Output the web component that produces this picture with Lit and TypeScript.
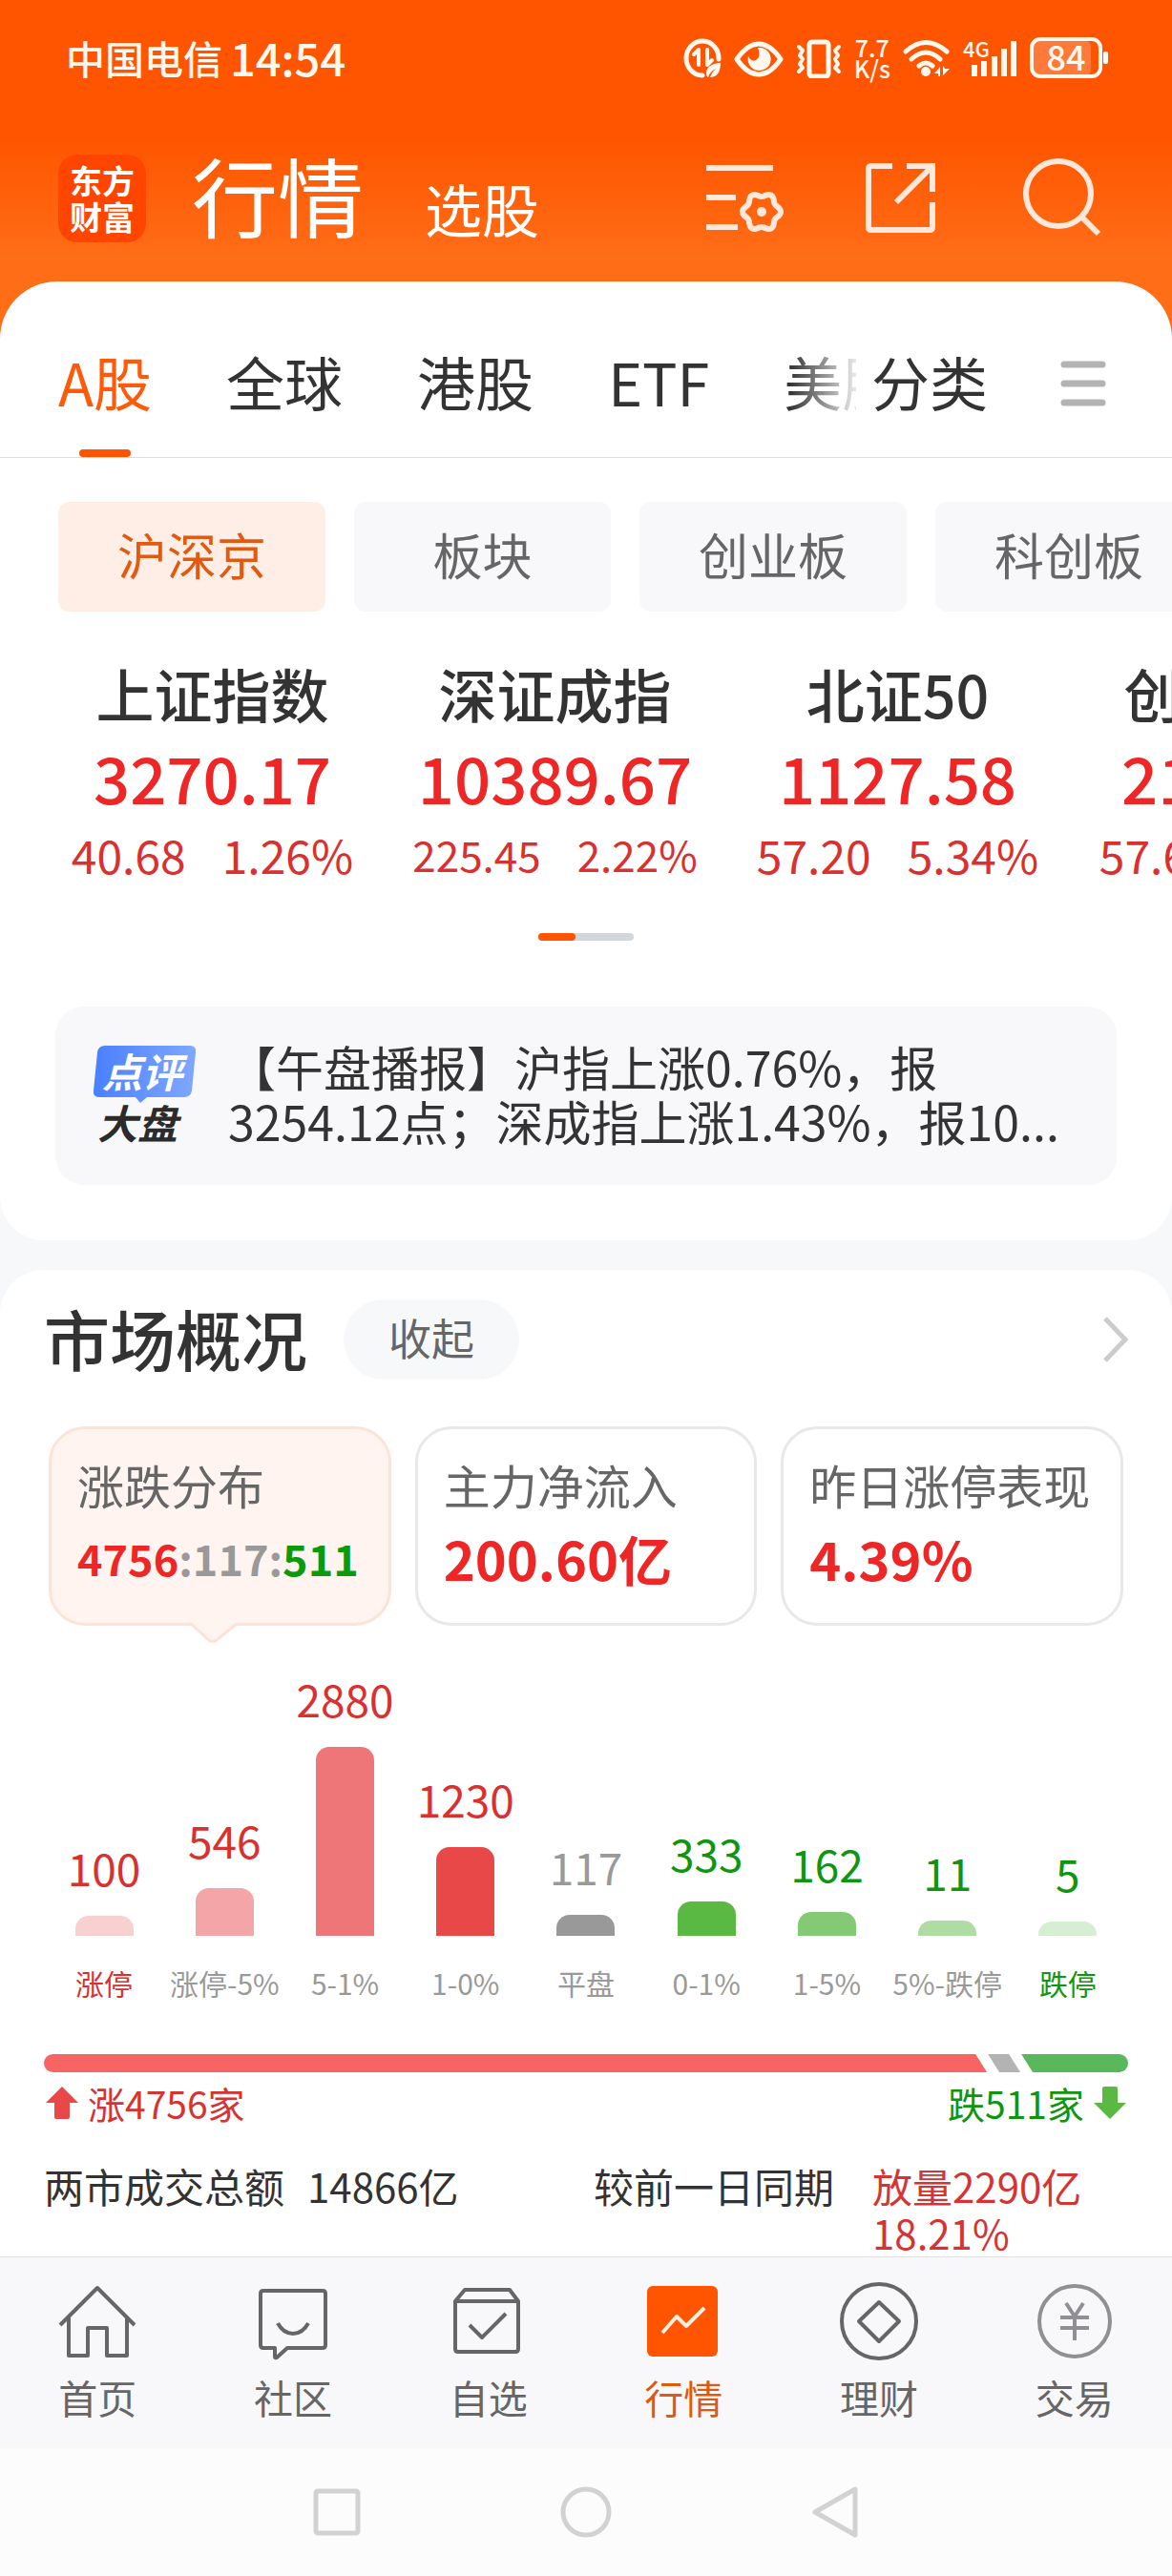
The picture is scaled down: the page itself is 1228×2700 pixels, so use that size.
import { LitElement, html, svg, css } from "lit";
import { customElement, state } from "lit/decorators.js";
import { classMap } from "lit/directives/class-map.js";
import { styleMap } from "lit/directives/style-map.js";

interface IndexQuote {
  name: string;
  price: string;
  change: string;
  percent: string;
  small?: boolean;
}

interface Bucket {
  label: string;
  count: number;
  height: number;
  tone: string;
  text: string;
  edge?: boolean;
}

const TABS = ["A股", "全球", "港股", "ETF", "美股"];
const BOARDS = ["沪深京", "板块", "创业板", "科创板"];

const QUOTES: IndexQuote[] = [
  { name: "上证指数", price: "3270.17", change: "40.68", percent: "1.26%" },
  { name: "深证成指", price: "10389.67", change: "225.45", percent: "2.22%", small: true },
  { name: "北证50", price: "1127.58", change: "57.20", percent: "5.34%" },
  { name: "创业板指", price: "2168.92", change: "57.64", percent: "2.73%" },
];

const BUCKETS: Bucket[] = [
  { label: "涨停", count: 100, height: 21, tone: "r1", text: "up", edge: true },
  { label: "涨停-5%", count: 546, height: 50, tone: "r2", text: "up" },
  { label: "5-1%", count: 2880, height: 198, tone: "r3", text: "up" },
  { label: "1-0%", count: 1230, height: 93, tone: "r4", text: "up" },
  { label: "平盘", count: 117, height: 22, tone: "flat-bar", text: "flat" },
  { label: "0-1%", count: 333, height: 36, tone: "g4", text: "down" },
  { label: "1-5%", count: 162, height: 25, tone: "g3", text: "down" },
  { label: "5%-跌停", count: 11, height: 16, tone: "g2", text: "down" },
  { label: "跌停", count: 5, height: 15, tone: "g1", text: "down", edge: true },
];

/* Six-lobed cog outline around a centre point. */
const cog = (cx: number, cy: number, r: number, depth: number): string => {
  const pts: string[] = [];
  for (let i = 0; i < 96; i++) {
    const a = (i / 96) * Math.PI * 2;
    const rr = r + depth * Math.cos(6 * a);
    pts.push(`${(cx + rr * Math.cos(a)).toFixed(2)} ${(cy + rr * Math.sin(a)).toFixed(2)}`);
  }
  return `M${pts.join("L")}Z`;
};

const NAV = [
  {
    label: "首页",
    icon: svg`<path d="M3 46 42 7 81 46M12 38V78H32V49H52V78H73V38"/>`,
  },
  {
    label: "社区",
    icon: svg`<path d="M11 10H73Q76 10 76 13V67Q76 70 73 70H36L25 80Q23 81 23 79V70H11Q8 70 8 67V13Q8 10 11 10Z"/><path d="M26 44Q32 55 42 55T58 44"/>`,
  },
  {
    label: "自选",
    icon: svg`<path d="M17 9H64L73 21V71Q73 74 70 74H10Q7 74 7 71V21ZM7 21H73M22 46 35 59 60 34"/>`,
  },
  {
    label: "行情",
    icon: svg`<rect class="solid" x="4" y="5" width="74" height="74" rx="6"/><path class="trace" d="M20 54 35 37 45 47 64 28"/>`,
  },
  {
    label: "理财",
    icon: svg`<circle cx="42" cy="42" r="39"/><path d="M42 22 63 42 42 63 21 42Z"/>`,
  },
  {
    label: "交易",
    icon: svg`<g class="pale"><circle cx="42" cy="42" r="37"/><path d="M33 23 42 37 51 23M42 37V62M27 38H57M27 49H57"/></g>`,
  },
];

@customElement("status-bar")
export class StatusBar extends LitElement {
  static styles = css`
    :host {
      display: flex;
      align-items: center;
      justify-content: space-between;
      padding: 38px 67px 0 69px;
      color: #fff8ee;
    }
    .left {
      display: flex;
      align-items: center;
      gap: 8px;
      line-height: 44px;
      font-weight: 500;
    }
    .carrier {
      font-size: 41px;
    }
    .clock {
      font-size: 47px;
    }
    .right {
      display: flex;
      align-items: center;
      gap: 13px;
    }
    .right svg {
      display: block;
      height: 44px;
      fill: none;
      stroke: currentColor;
      stroke-width: 5;
      stroke-linecap: round;
      stroke-linejoin: round;
    }
    .fill {
      fill: currentColor;
      stroke: none;
    }
    .level {
      fill: rgba(255, 255, 255, 0.22);
      stroke: none;
    }
    .thin {
      stroke-width: 4;
    }
    .speed {
      font-size: 25px;
      line-height: 22px;
      text-align: center;
      font-weight: 500;
    }
    .num {
      font-size: 36px;
      font-weight: 500;
    }
    .gen {
      font-size: 22px;
      font-weight: 500;
    }
  `;

  render() {
    return html`
      <div class="left"><span class="carrier">中国电信</span><span class="clock">14:54</span></div>
      <div class="right">
        <svg width="40" viewBox="0 0 40 44" aria-hidden="true">
          <path d="M37 24A17 18 0 1 0 20 41" />
          <path class="thin" d="M11 19 16 14V30M25 14V30L30 25" />
          <path class="fill" d="M39 28C30 28 24 32 24 39C24 41 25 43 26 43C27 39 30 36 34 34C31 37 29 40 28 43C35 43 39 38 39 28Z" />
        </svg>
        <svg width="52" viewBox="0 0 52 44" aria-hidden="true">
          <path d="M3 24Q14 8 26 8T49 24Q38 40 26 40T3 24Z" />
          <path class="fill" d="M27 12A12 12 0 1 1 15 21Q18 27 23 25Q29 21 25 12Z" />
        </svg>
        <svg width="48" viewBox="0 0 48 44" aria-hidden="true">
          <rect x="14" y="6" width="20" height="36" rx="3" />
          <path class="thin" d="M3 11 7 15 4 20 7 24 4 29 7 33 3 37M45 11 41 15 44 20 41 24 44 29 41 33 45 37" />
        </svg>
        <div class="speed">7.7<br />K/s</div>
        <svg width="50" viewBox="0 0 50 44" aria-hidden="true">
          <path d="M3 16Q24-3 46 16M9 24Q24 10 39 24M17 31Q24 25 31 31" />
          <circle class="fill" cx="24" cy="37" r="5" />
          <path class="fill" d="M39 32V42H37V39H33ZM42 31V41L49 34H44Z" />
        </svg>
        <svg width="57" viewBox="0 0 57 44" aria-hidden="true">
          <text class="fill gen" x="0" y="22">4G</text>
          <path class="fill" d="M9 30h6v12H9zM19 26h6v16h-6zM30 21h6v21h-6zM40 13h6v29h-6zM50 5h6v37h-6z" />
        </svg>
        <svg width="82" viewBox="0 0 82 44" aria-label="电量 84%">
          <rect class="level" x="4" y="4" width="60" height="38" rx="7" />
          <rect class="thin" x="2" y="3" width="72" height="39" rx="9" />
          <rect class="fill" x="77" y="16" width="5" height="13" rx="2" />
          <text class="fill num" x="38" y="36" text-anchor="middle">84</text>
        </svg>
      </div>
    `;
  }
}

@customElement("change-chart")
export class ChangeChart extends LitElement {
  static styles = css`
    :host {
      display: grid;
      grid-template-columns: repeat(9, 1fr);
    }
    .col {
      display: flex;
      flex-direction: column;
      align-items: center;
      justify-content: flex-end;
      min-height: 348px;
      white-space: nowrap;
    }
    .count {
      font-size: 46px;
      line-height: 60px;
    }
    .bar {
      width: 61px;
      margin: 21px 0 29px;
      border-radius: 14px 14px 0 0;
    }
    .label {
      font-size: 30px;
      line-height: 40px;
      color: #999;
    }
    .up,
    .label.up.edge {
      color: #d93030;
    }
    .down,
    .label.down.edge {
      color: #0f960f;
    }
    .flat {
      color: #999;
    }
    .label.up:not(.edge),
    .label.down:not(.edge) {
      color: #999;
    }
    .r1 { background: #f9d0d0; }
    .r2 { background: #f4a5a7; }
    .r3 { background: #ee7678; }
    .r4 { background: #e84848; }
    .flat-bar { background: #999; }
    .g4 { background: #5ab943; }
    .g3 { background: #84ca75; }
    .g2 { background: #addda2; }
    .g1 { background: #d6eed1; }
  `;

  render() {
    return BUCKETS.map(
      (b) => html`<div class="col">
        <span class=${`count ${b.text}`}>${b.count}</span>
        <span class=${`bar ${b.tone}`} style=${styleMap({ height: `${b.height}px` })}></span>
        <span class=${classMap({ label: true, [b.text]: true, edge: !!b.edge })}>${b.label}</span>
      </div>`,
    );
  }
}

@customElement("app-root")
export class AppRoot extends LitElement {
  @state() private tab = "A股";
  @state() private board = "沪深京";

  static styles = css`
    :host {
      display: flex;
      flex-direction: column;
      min-height: 100vh;
      overflow: hidden;
      font-family: "Noto Sans CJK SC", sans-serif;
      color: #333;
      background: linear-gradient(#ff5500 0, #ff5500 145px, #ff6d17 270px, #ff6d17 360px) no-repeat 0 0 / 100% 360px #f7f8fa;
    }
    button {
      font: inherit;
      color: inherit;
      background: none;
      border: 0;
      padding: 0;
      margin: 0;
      flex: none;
      white-space: nowrap;
    }
    a {
      color: inherit;
      text-decoration: none;
    }
    h2,
    p {
      margin: 0;
    }
    svg {
      display: block;
      flex: none;
      fill: none;
    }

    .head {
      display: flex;
      align-items: center;
      padding: 80px 74px 41px 61px;
      color: #fff;
    }
    .logo {
      display: grid;
      place-content: center;
      width: 92px;
      height: 92px;
      border-radius: 20px;
      background: #ff4500;
      font-size: 34px;
      line-height: 38px;
      font-weight: 700;
      text-align: center;
    }
    .modes {
      display: flex;
      align-items: flex-end;
      align-self: flex-start;
      gap: 64px;
      flex: 1;
      margin-left: 48px;
    }
    .modes .main {
      font-size: 90px;
      line-height: 82px;
    }
    .modes .sub {
      font-size: 60px;
      line-height: 52px;
    }
    .tools {
      display: flex;
      gap: 82px;
    }
    .tools svg {
      stroke: #ffe8d9;
      stroke-width: 6;
    }
    .dot {
      fill: #ffe8d9;
      stroke: none;
    }

    .quotes-card {
      background: #fff;
      border-radius: 60px 60px 46px 46px;
      padding-bottom: 58px;
    }
    .tabs {
      display: flex;
      border-bottom: 1px solid #ddd;
      font-size: 61px;
      line-height: 84px;
      padding-right: 69px;
    }
    .scroller {
      display: flex;
      gap: 78px;
      flex: 1;
      min-width: 0;
      padding-left: 61px;
      overflow: hidden;
      -webkit-mask-image: linear-gradient(to right, #000 calc(100% - 70px), rgba(0, 0, 0, 0.1));
      mask-image: linear-gradient(to right, #000 calc(100% - 70px), rgba(0, 0, 0, 0.1));
    }
    .tab {
      display: flex;
      flex-direction: column;
      align-items: center;
      gap: 29px;
      padding-top: 63px;
    }
    .tab::after {
      content: "";
      width: 54px;
      height: 8px;
      border-radius: 4px;
    }
    .tab.on {
      color: #fe5a0a;
    }
    .tab.on::after {
      background: #ff5500;
    }
    .sorts {
      margin: 0 76px 0 16px;
    }
    .menu {
      padding-top: 30px;
    }
    .menu svg {
      stroke: #b3b3b3;
      stroke-width: 7;
      stroke-linecap: round;
    }

    .boards {
      display: flex;
      gap: 30px;
      padding: 46px 0 0 61px;
      overflow: hidden;
    }
    .board {
      min-width: 269px;
      padding: 0 62px 5px;
      border-radius: 12px;
      background: #f8f8fa;
      color: #666;
      font-size: 52px;
      line-height: 110px;
    }
    .board.on {
      background: #ffeee6;
      color: #e2590f;
    }

    .quotes {
      display: flex;
      margin: 0;
      padding: 46px 0 0 43px;
      list-style: none;
      overflow: hidden;
      text-align: center;
    }
    .quote {
      flex: none;
      width: 359px;
      color: #e93030;
    }
    .name {
      font-size: 61px;
      line-height: 80px;
      font-weight: 500;
      color: #333;
    }
    .price {
      font-size: 67px;
      line-height: 94px;
      font-weight: 500;
      color: #ee2626;
    }
    .delta {
      display: flex;
      justify-content: center;
      gap: 38px;
      font-size: 48px;
      line-height: 68px;
      color: #d93030;
    }
    .delta.small {
      font-size: 44px;
    }
    .pager {
      width: 100px;
      height: 8px;
      margin: 49px auto 69px;
      border-radius: 4px;
      background: #d3d7dc;
    }
    .pager::before {
      content: "";
      display: block;
      width: 39px;
      height: 8px;
      border-radius: 4px;
      background: #ff5500;
    }

    .news {
      display: flex;
      align-items: center;
      gap: 32px;
      margin: 0 58px;
      padding: 34px 28px 39px 39px;
      border-radius: 30px;
      background: #f8f8fa;
      font-size: 50px;
      line-height: 57px;
    }
    .chip-text {
      fill: #fff;
    }
    .board-text {
      fill: #2b2b2b;
    }
    .badge-text {
      font-size: 42px;
      font-weight: 700;
      font-style: italic;
    }

    .market {
      flex: 1;
      margin-top: 31px;
      padding: 31px 46px 1px;
      border-radius: 46px 46px 0 0;
      background: #fff;
    }
    .title-row {
      display: flex;
      align-items: center;
    }
    .title-row h2 {
      font-size: 69px;
      line-height: 78px;
      font-weight: 500;
      padding-bottom: 4px;
      margin-right: 38px;
    }
    .fold {
      padding: 0 47px 4px;
      border-radius: 42px;
      background: #f7f8fa;
      color: #666;
      font-size: 45px;
      line-height: 80px;
    }
    .more {
      margin-left: auto;
    }
    .more svg {
      stroke: #ccc;
      stroke-width: 5;
    }

    .cards {
      display: grid;
      grid-template-columns: repeat(3, 1fr);
      gap: 25px;
      margin: 49px 5px 0;
    }
    .card {
      position: relative;
      box-sizing: border-box;
      text-align: left;
      padding: 28px 0 28px 27px;
      border: 3px solid #e8e8e8;
      border-radius: 38px;
    }
    .card.on {
      background: #fff4ef;
      border-color: #fde3d7;
    }
    .pointer {
      position: absolute;
      left: 50%;
      top: 100%;
      margin-left: -33px;
      fill: #fff4ef;
      stroke: #fde3d7;
      stroke-width: 3;
    }
    .card-label {
      display: block;
      font-size: 49px;
      line-height: 60px;
      color: #666;
    }
    .card-value {
      display: block;
      margin-top: 7px;
      font-size: 56px;
      line-height: 80px;
      font-weight: 700;
      color: #ee2626;
    }
    .card-value.small {
      font-size: 45px;
    }
    .neutral {
      color: #999;
    }
    .fall {
      color: #0a9a0a;
    }

    .chart {
      margin-top: 46px;
    }

    .ratio {
      display: flex;
      gap: 1px;
      height: 19px;
      margin-top: 55px;
      border-radius: 10px;
      overflow: hidden;
    }
    .ratio-up {
      flex: 989;
      background: #f66464;
      clip-path: polygon(0 0, calc(100% - 12px) 0, 100% 100%, 0 100%);
    }
    .ratio-flat {
      flex: 34;
      background: #b3b3b3;
      clip-path: polygon(0 0, calc(100% - 12px) 0, 100% 100%, 12px 100%);
    }
    .ratio-down {
      flex: 112;
      background: #5ab85c;
      clip-path: polygon(0 0, 100% 0, 100% 100%, 12px 100%);
    }
    .totals {
      display: flex;
      justify-content: space-between;
      margin-top: 7px;
      padding: 0 2px;
      font-size: 39px;
      line-height: 50px;
    }
    .total {
      display: flex;
      align-items: center;
      gap: 10px;
    }
    .rise-text {
      color: #d63333;
    }
    .fall-text {
      color: #0f960f;
    }
    .rise-arrow {
      fill: #e84848;
    }
    .fall-arrow {
      fill: #5ab943;
    }
    .turnover {
      display: grid;
      grid-template-columns: 576fr 560fr;
      margin-top: 37px;
      font-size: 42px;
      line-height: 49px;
    }
    .pair {
      display: flex;
      gap: 24px;
    }
    .pair.wide {
      gap: 40px;
    }
    .pair span:first-child {
      flex: none;
    }

    .nav {
      display: grid;
      grid-template-columns: repeat(6, 1fr);
      border-top: 1px solid #e2e2e2;
      background: #f8f8fa;
      padding: 25px 0 29px;
    }
    .nav-item {
      display: flex;
      flex-direction: column;
      align-items: center;
      gap: 12px;
      font-size: 41px;
      line-height: 50px;
      color: #666;
    }
    .nav-item svg {
      stroke: #666;
      stroke-width: 4;
      stroke-linejoin: round;
    }
    .nav-item.on {
      color: #dc5a14;
    }
    .nav-item .solid {
      fill: #ff5500;
      stroke: none;
    }
    .nav-item .trace {
      stroke: #ffefe0;
    }
    .nav-item .pale {
      stroke: #8f8f94;
    }
    .system {
      display: flex;
      justify-content: center;
      gap: 205px;
      padding: 39px 0;
      background: #fcfcfc;
    }
    .system svg {
      stroke: #d2d2d2;
      stroke-width: 5;
      stroke-linejoin: round;
    }
  `;

  private renderHead() {
    return html`<header class="head">
      <div class="logo">东方<br />财富</div>
      <div class="modes">
        <button class="main">行情</button>
        <button class="sub">选股</button>
      </div>
      <div class="tools">
        <button aria-label="设置">
          <svg width="84" height="84" viewBox="0 0 84 84">
            <path d="M2 10H72M2 41H33M2 72H35" />
            <path d=${cog(60, 56, 18, 2)} />
            <circle class="dot" cx="60" cy="56" r="5" />
          </svg>
        </button>
        <button aria-label="分享">
          <svg width="84" height="84" viewBox="0 0 84 84">
            <path d="M31 8H9Q6 8 6 11V72Q6 75 9 75H70Q73 75 73 72V46M46 8H73V35M35 46 73 8" />
          </svg>
        </button>
        <button aria-label="搜索">
          <svg width="84" height="84" viewBox="0 0 84 84">
            <circle cx="39" cy="37" r="34" />
            <path d="M63 61 81 79" />
          </svg>
        </button>
      </div>
    </header>`;
  }

  private renderQuotes() {
    return html`<section class="quotes-card">
      <div class="tabs">
        <div class="scroller">
          ${TABS.map(
            (t) => html`<button class=${classMap({ tab: true, on: t === this.tab })} @click=${() => (this.tab = t)}>${t}</button>`,
          )}
        </div>
        <button class="tab sorts">分类</button>
        <button class="menu" aria-label="菜单">
          <svg width="48" height="48" viewBox="0 0 48 48"><path d="M4 4H44M4 24H44M4 44H44" /></svg>
        </button>
      </div>
      <div class="boards">
        ${BOARDS.map(
          (b) => html`<button class=${classMap({ board: true, on: b === this.board })} @click=${() => (this.board = b)}>${b}</button>`,
        )}
      </div>
      <ul class="quotes">
        ${QUOTES.map(
          (q) => html`<li class="quote">
            <div class="name">${q.name}</div>
            <div class="price">${q.price}</div>
            <div class=${classMap({ delta: true, small: !!q.small })}><span>${q.change}</span><span>${q.percent}</span></div>
          </li>`,
        )}
      </ul>
      <div class="pager"></div>
      <div class="news">
        <svg width="110" height="104" viewBox="0 0 110 104">
          <defs>
            <linearGradient id="chip" x1="0" y1="0" x2="1" y2="0">
              <stop offset="0" stop-color="#4a80ff" />
              <stop offset="1" stop-color="#7fa8ff" />
            </linearGradient>
          </defs>
          <path
            fill="url(#chip)"
            d="M13 2H102Q109 2 108 9L104 49Q103 56 96 56H57L50 62 45 56H7Q0 56 1 49L5 9Q6 2 13 2Z"
          />
          <text class="badge-text chip-text" x="10" y="46">点评</text>
          <text class="badge-text board-text" x="5" y="100">大盘</text>
        </svg>
        <p>【午盘播报】沪指上涨0.76%，报3254.12点；深成指上涨1.43%，报10...</p>
      </div>
    </section>`;
  }

  private renderMarket() {
    return html`<section class="market">
      <div class="title-row">
        <h2>市场概况</h2>
        <button class="fold">收起</button>
        <button class="more" aria-label="更多">
          <svg width="28" height="50" viewBox="0 0 28 50"><path d="M4 3 25 25 4 47" /></svg>
        </button>
      </div>
      <div class="cards">
        <button class="card on">
          <span class="card-label">涨跌分布</span>
          <span class="card-value small">4756<span class="neutral">:117:</span><span class="fall">511</span></span>
          <svg class="pointer" width="54" height="22" viewBox="0 0 54 22"><path d="M2 0 22 18Q26 21 30 18L52 0" /></svg>
        </button>
        <button class="card">
          <span class="card-label">主力净流入</span>
          <span class="card-value">200.60亿</span>
        </button>
        <button class="card">
          <span class="card-label">昨日涨停表现</span>
          <span class="card-value">4.39%</span>
        </button>
      </div>
      <change-chart class="chart"></change-chart>
      <div class="ratio">
        <div class="ratio-up"></div>
        <div class="ratio-flat"></div>
        <div class="ratio-down"></div>
      </div>
      <div class="totals">
        <div class="total rise-text">
          <svg class="rise-arrow" width="34" height="34" viewBox="0 0 34 34"><path d="M17 0 34 17H25V32Q25 34 23 34H11Q9 34 9 32V17H0Z" /></svg>
          <span>涨4756家</span>
        </div>
        <div class="total fall-text">
          <span>跌511家</span>
          <svg class="fall-arrow" width="34" height="34" viewBox="0 0 34 34"><path d="M17 34 34 17H25V2Q25 0 23 0H11Q9 0 9 2V17H0Z" /></svg>
        </div>
      </div>
      <div class="turnover">
        <div class="pair"><span>两市成交总额</span><span>14866亿</span></div>
        <div class="pair wide"><span>较前一日同期</span><span class="rise-text">放量2290亿 18.21%</span></div>
      </div>
    </section>`;
  }

  render() {
    return html`
      <status-bar></status-bar>
      ${this.renderHead()} ${this.renderQuotes()} ${this.renderMarket()}
      <nav class="nav">
        ${NAV.map(
          (n) => html`<a href="#" class=${classMap({ "nav-item": true, on: n.label === "行情" })}>
            <svg width="84" height="84" viewBox="0 0 84 84">${n.icon}</svg>
            <span>${n.label}</span>
          </a>`,
        )}
      </nav>
      <div class="system">
        <button aria-label="最近任务">
          <svg width="56" height="56" viewBox="0 0 56 56"><rect x="6" y="6" width="44" height="44" rx="2" /></svg>
        </button>
        <button aria-label="主屏幕">
          <svg width="56" height="56" viewBox="0 0 56 56"><circle cx="28" cy="28" r="24" /></svg>
        </button>
        <button aria-label="返回">
          <svg width="56" height="56" viewBox="0 0 56 56"><path d="M49 4V52L7 28Z" /></svg>
        </button>
      </div>
    `;
  }
}
